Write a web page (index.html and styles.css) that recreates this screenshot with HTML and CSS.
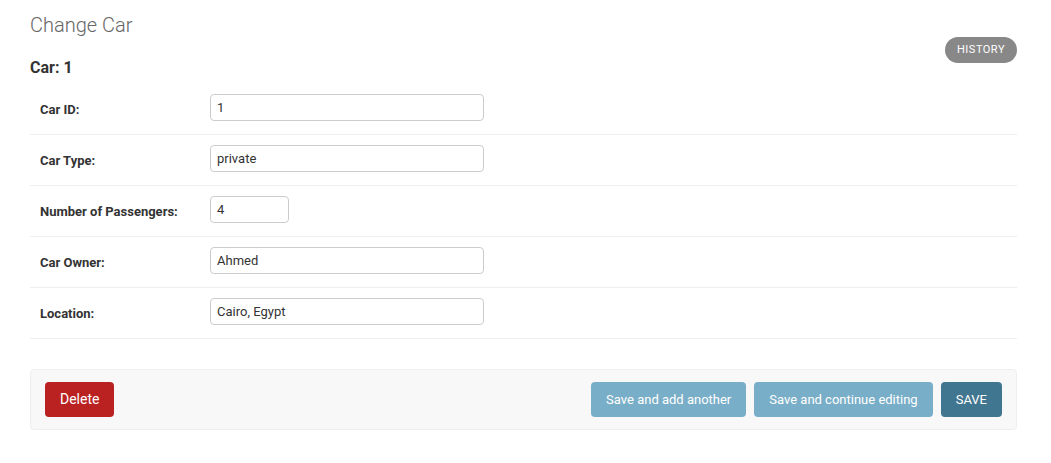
FILE: index.html
```html
<!DOCTYPE html>
<html lang="en">
<head>
<meta charset="utf-8">
<title>Change Car</title>
<link rel="stylesheet" href="styles.css">
</head>
<body>
<div class="content">
  <h1 class="title">Change Car</h1>
  <div class="toolbar">
    <h2 class="subtitle">Car: 1</h2>
    <a class="history" href="#">History</a>
  </div>
  <form class="form">
    <fieldset class="fieldset">
      <div class="form-row">
        <label class="label">Car ID:</label>
        <input class="field" type="text" value="1">
      </div>
      <div class="form-row">
        <label class="label">Car Type:</label>
        <input class="field" type="text" value="private">
      </div>
      <div class="form-row">
        <label class="label">Number of Passengers:</label>
        <input class="field field-small" type="text" value="4">
      </div>
      <div class="form-row">
        <label class="label">Car Owner:</label>
        <input class="field" type="text" value="Ahmed">
      </div>
      <div class="form-row">
        <label class="label">Location:</label>
        <input class="field" type="text" value="Cairo, Egypt">
      </div>
    </fieldset>
    <div class="submit-row">
      <a class="btn btn-delete" href="#">Delete</a>
      <div class="spacer"></div>
      <button class="btn btn-light" type="button">Save and add another</button>
      <button class="btn btn-light" type="button">Save and continue editing</button>
      <button class="btn btn-save" type="button">SAVE</button>
    </div>
  </form>
</div>
</body>
</html>
```
FILE: styles.css
```css
* { box-sizing: border-box; }
html, body {
  margin: 0;
  padding: 0;
  background: #fff;
  font-family: Roboto, "Liberation Sans", Arial, sans-serif;
  color: #333;
}
.content {
  padding: 14px 34px 20px 30px;
}
.title {
  margin: 0;
  font-size: 20px;
  line-height: 23px;
  font-weight: 300;
  color: #666;
}
.toolbar {
  display: flex;
  justify-content: space-between;
  align-items: flex-start;
  margin-top: 0;
}
.subtitle {
  margin: 21px 0 6px 0;
  font-size: 16px;
  line-height: 20px;
  font-weight: 700;
  color: #333;
}
.history {
  display: block;
  height: 26px;
  line-height: 20px;
  padding: 3px 12px;
  border-radius: 15px;
  background: #888;
  color: #fff;
  font-size: 11px;
  letter-spacing: 0.5px;
  text-transform: uppercase;
  text-decoration: none;
}
.form { margin: 0; }
.fieldset {
  margin: 0;
  padding: 0;
  border: 0;
  min-width: 0;
}
.form-row {
  display: flex;
  align-items: center;
  padding: 10px 10px 13px 10px;
  border-bottom: 1px solid #eee;
}
.label {
  width: 170px;
  flex: none;
  font-size: 13px;
  line-height: 16px;
  font-weight: 700;
  color: #333;
  padding-top: 4px;
}
.field {
  width: 274px;
  height: 27px;
  padding: 2px 6px;
  border: 1px solid #ccc;
  border-radius: 4px;
  font-family: Roboto, "Liberation Sans", Arial, sans-serif;
  font-size: 13px;
  color: #333;
  background: #fff;
  outline: none;
}
.field-small { width: 79px; }
.submit-row {
  display: flex;
  align-items: center;
  gap: 8px;
  margin-top: 30px;
  padding: 12px 14px;
  background: #f8f8f8;
  border: 1px solid #eee;
  border-radius: 4px;
}
.spacer { flex: 1; }
.btn {
  display: block;
  height: 35px;
  line-height: 35px;
  padding: 0 15px;
  border: 0;
  border-radius: 4px;
  font-family: Roboto, "Liberation Sans", Arial, sans-serif;
  font-size: 13px;
  font-weight: 400;
  color: #fff;
  text-decoration: none;
  cursor: pointer;
}
.btn-delete { background: #ba2121; font-size: 14px; }
.btn-light { background: #79aec8; }
.btn-save { background: #417690; }
```
